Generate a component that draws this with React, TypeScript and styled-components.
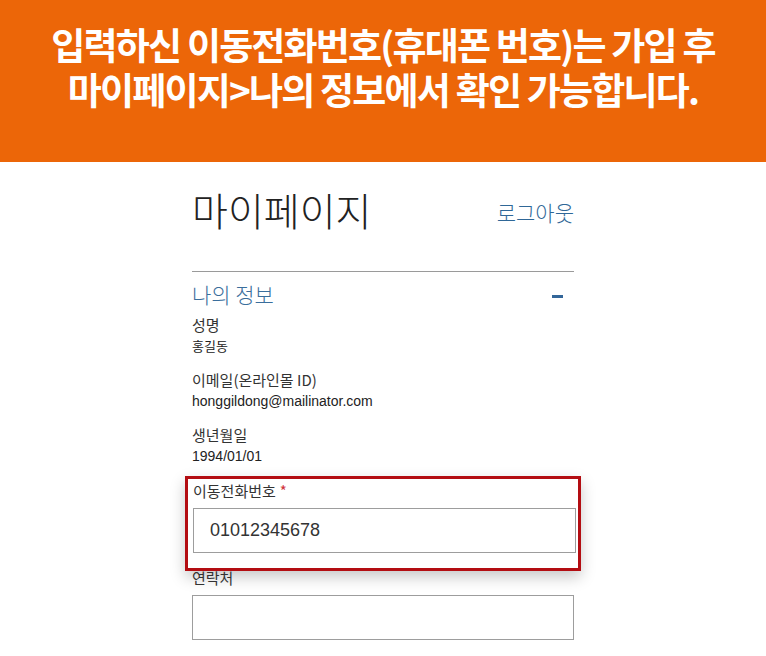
import styled, { createGlobalStyle } from "styled-components";

const GlobalStyle = createGlobalStyle`
  html, body {
    margin: 0;
    padding: 0;
    background: #ffffff;
  }
  body {
    font-family: "Noto Sans CJK KR", "Noto Sans", sans-serif;
    color: #333;
  }
`

const Page = styled.div`
  width: 766px;
  height: 656px;
  overflow: hidden;
  background: #fff;
`

const Banner = styled.div`
  height: 162px;
  background: #ec6608;
  padding-top: 22px;
  box-sizing: border-box;
  text-align: center;
  color: #fff;
  font-family: "Noto Sans CJK KR", sans-serif;
  font-weight: 700;
  font-size: 37px;
  line-height: 45px;
  letter-spacing: -1.8px;
`

const Column = styled.div`
  width: 382px;
  margin: 0 auto;
  padding-top: 22px;
`

const Header = styled.div`
  display: flex;
  justify-content: space-between;
  align-items: flex-start;
  height: 87px;
  border-bottom: 1px solid #9a9a9a;
`

const Title = styled.h1`
  margin: 0;
  font-size: 39px;
  font-weight: 300;
  color: #222;
  line-height: 50px;
`

const Logout = styled.a`
  margin-top: 15px;
  font-size: 21px;
  line-height: 26px;
  font-weight: 300;
  color: #2f6797;
  text-decoration: none;
`

const SectionHead = styled.div`
  display: flex;
  justify-content: space-between;
  align-items: center;
  height: 43px;
`

const SectionTitle = styled.span`
  font-size: 21px;
  font-weight: 300;
  color: #3a6e9c;
`

const Minus = styled.span`
  width: 11px;
  height: 3px;
  background: #336699;
  margin-right: 11px;
  margin-top: 6px;
`

const Field = styled.div`
  margin-bottom: 13px;
`

const Label = styled.div`
  font-size: 15px;
  line-height: 20px;
  color: #333;
`

const Value = styled.div<{ $latin?: boolean }>`
  font-family: ${p => p.$latin ? '"Liberation Sans", Arial, sans-serif' : '"Noto Sans CJK KR", sans-serif'};
  font-size: ${p => p.$latin ? '14px' : '13px'};
  line-height: 22px;
  color: #222;
`

const Highlight = styled.div`
  margin: -4px -7px 0;
  padding: 2px 2px 15px 5px;
  border: 3px solid #b30d12;
  box-shadow: 0 6px 14px rgba(0, 0, 0, 0.22);
  background: #fff;
`

const Required = styled.span`
  color: #d0343c;
  margin-left: 4px;
`

const Input = styled.div<{ $gap?: number }>`
  height: 45px;
  box-sizing: border-box;
  border: 1px solid #9d9d9d;
  margin-top: ${p => p.$gap ?? 6}px;
  padding-left: 16px;
  display: flex;
  align-items: center;
  font-family: "Liberation Sans", Arial, sans-serif;
  font-size: 18px;
  color: #333;
`

const PlainField = styled.div`
  margin-top: -3px;
`

export default function App() {
  return <Page>
    <GlobalStyle />
    <Banner>
      <div>입력하신 이동전화번호(휴대폰 번호)는 가입 후</div>
      <div>마이페이지&gt;나의 정보에서 확인 가능합니다.</div>
    </Banner>
    <Column>
      <Header>
        <Title>마이페이지</Title>
        <Logout href="#">로그아웃</Logout>
      </Header>
      <SectionHead>
        <SectionTitle>나의 정보</SectionTitle>
        <Minus />
      </SectionHead>
      <Field>
        <Label>성명</Label>
        <Value>홍길동</Value>
      </Field>
      <Field>
        <Label>이메일(온라인몰 ID)</Label>
        <Value $latin>honggildong@mailinator.com</Value>
      </Field>
      <Field>
        <Label>생년월일</Label>
        <Value $latin>1994/01/01</Value>
      </Field>
      <Highlight>
        <Label>이동전화번호<Required>*</Required></Label>
        <Input $gap={7}>01012345678</Input>
      </Highlight>
      <PlainField>
        <Label>연락처</Label>
        <Input $gap={7} />
      </PlainField>
    </Column>
  </Page>
}
